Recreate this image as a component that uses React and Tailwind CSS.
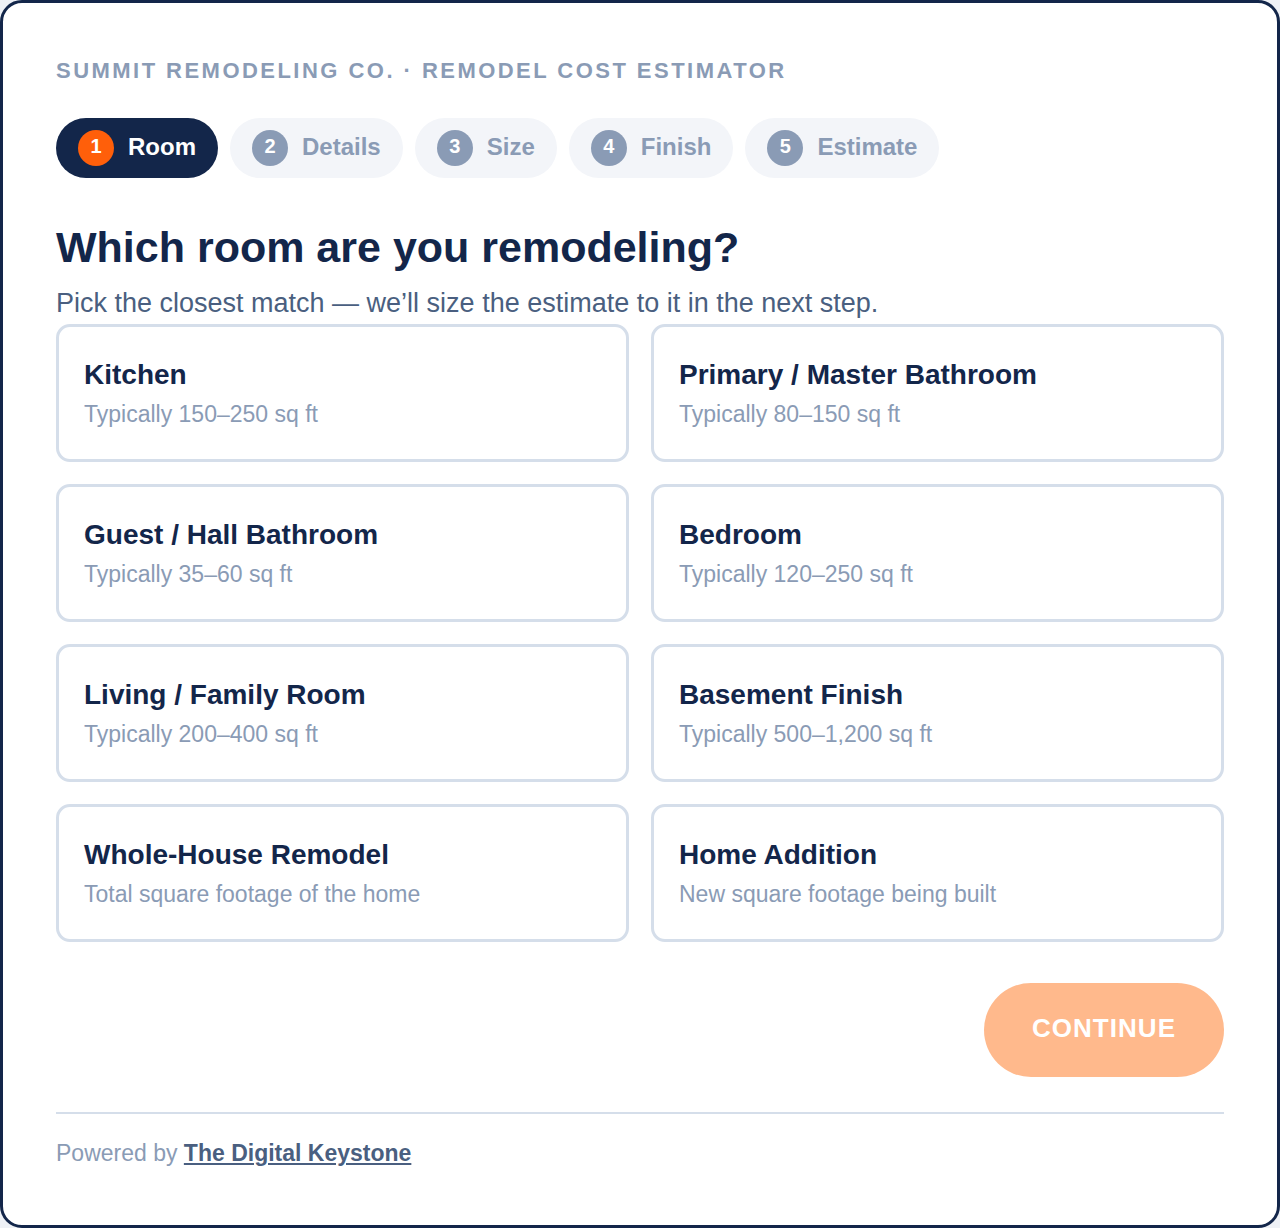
import React, { useState } from 'react';

const steps = ['Room', 'Details', 'Size', 'Finish', 'Estimate'];

const rooms = [
  { name: 'Kitchen', hint: 'Typically 150–250 sq ft' },
  { name: 'Primary / Master Bathroom', hint: 'Typically 80–150 sq ft' },
  { name: 'Guest / Hall Bathroom', hint: 'Typically 35–60 sq ft' },
  { name: 'Bedroom', hint: 'Typically 120–250 sq ft' },
  { name: 'Living / Family Room', hint: 'Typically 200–400 sq ft' },
  { name: 'Basement Finish', hint: 'Typically 500–1,200 sq ft' },
  { name: 'Whole-House Remodel', hint: 'Total square footage of the home' },
  { name: 'Home Addition', hint: 'New square footage being built' },
];

const App = () => {
  const [room, setRoom] = useState(null);

  return (
    <div className="bg-[#eef1f6] min-h-[1228px]" style={{ fontFamily: '"Liberation Sans", Arial, sans-serif' }}>
      <div className="h-[1228px] bg-white border-[3px] border-[#13264a] rounded-[22px] px-[53px] pt-[53px] flex flex-col">
        <div className="text-[22px] font-bold tracking-[0.112em] text-[#8a9bb5] uppercase leading-[30px]">
          Summit Remodeling Co. · Remodel Cost Estimator
        </div>

        <div className="flex gap-3 mt-[32px]">
          {steps.map((s, i) => {
            const active = i === 0;
            return (
              <div
                key={s}
                className={
                  active
                    ? 'h-[60px] rounded-full bg-[#13264a] flex items-center pl-[22px] pr-[22px] gap-[14px]'
                    : 'h-[60px] rounded-full bg-[#f3f5f9] flex items-center pl-[22px] pr-[22px] gap-[14px]'
                }
              >
                <span
                  className={
                    active
                      ? 'w-9 h-9 rounded-full bg-[#ff5f0a] text-white text-[20px] font-bold flex items-center justify-center pb-[4px]'
                      : 'w-9 h-9 rounded-full bg-[#8a9bb5] text-white text-[20px] font-bold flex items-center justify-center pb-[4px]'
                  }
                >
                  {i + 1}
                </span>
                <span className={active ? 'text-[24px] font-bold text-white pb-[3px]' : 'text-[24px] font-bold text-[#8a9bb5] pb-[3px]'}>
                  {s}
                </span>
              </div>
            );
          })}
        </div>

        <h1 className="text-[43px] font-bold text-[#13264a] leading-[50px] mt-[44px]">
          Which room are you remodeling?
        </h1>
        <p className="text-[27px] text-[#4a5f80] leading-[32px] mt-[15px]">
          Pick the closest match — we’ll size the estimate to it in the next step.
        </p>

        <div className="grid grid-cols-2 gap-x-[22px] gap-y-[22px] mt-[5px]">
          {rooms.map((r) => (
            <div
              key={r.name}
              onClick={() => setRoom(r.name)}
              className={
                room === r.name
                  ? 'h-[138px] rounded-[14px] border-[3px] border-[#ff5f0a] bg-white px-[25px] flex flex-col justify-center cursor-pointer'
                  : 'h-[138px] rounded-[14px] border-[3px] border-[#d5deea] bg-white px-[25px] flex flex-col justify-center cursor-pointer'
              }
            >
              <div className="text-[28px] font-bold text-[#13264a] leading-[34px]">{r.name}</div>
              <div className="text-[23px] text-[#8a9bb5] leading-[30px] mt-[7px]">{r.hint}</div>
            </div>
          ))}
        </div>

        <div className="flex justify-end mt-[41px]">
          <button
            type="button"
            className="w-[240px] h-[94px] rounded-full bg-[#ffb98c] text-white text-[26px] font-bold tracking-[0.04em] uppercase pb-[4px]"
          >
            Continue
          </button>
        </div>

        <div className="h-[2px] bg-[#d5deea] mt-[35px]"></div>

        <div className="text-[23px] text-[#8a9bb5] mt-[24px] leading-[30px]">
          Powered by{' '}
          <a href="#" className="font-bold text-[#4a5f80] underline">
            The Digital Keystone
          </a>
        </div>
      </div>
    </div>
  );
};

export default App;
